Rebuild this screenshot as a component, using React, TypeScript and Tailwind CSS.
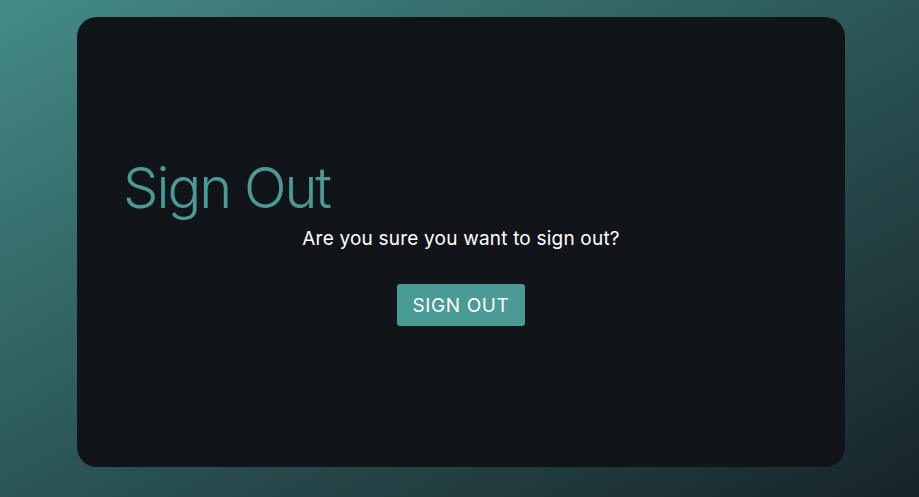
import React from "react";

export default function App() {
  return (
    <div
      className="w-[919px] h-[497px] flex items-start justify-start pl-[77px] pt-[17px] bg-gradient-to-br from-[#448b87] via-[#2b5656] to-[#17242a]"
      style={{ fontFamily: "Inter, 'Noto Sans', sans-serif" }}
    >
      <div className="w-[768px] h-[450px] rounded-[20px] bg-[#111418] flex flex-col px-[48px] pt-[139px]">
        <h1 className="-ml-[2px] text-[56px] leading-[64px] font-light text-[#4a9a95] tracking-[-2px]">Sign Out</h1>
        <p className="mt-[7px] text-center text-[19px] leading-[24px] text-white tracking-[0.2px]">
          Are you sure you want to sign out?
        </p>
        <div className="flex justify-center mt-[33px]">
          <button className="w-[128px] h-[42px] rounded-[3px] bg-[#4a9a95] text-white text-[19px] leading-none tracking-[0.6px]">
            SIGN OUT
          </button>
        </div>
      </div>
    </div>
  );
}
